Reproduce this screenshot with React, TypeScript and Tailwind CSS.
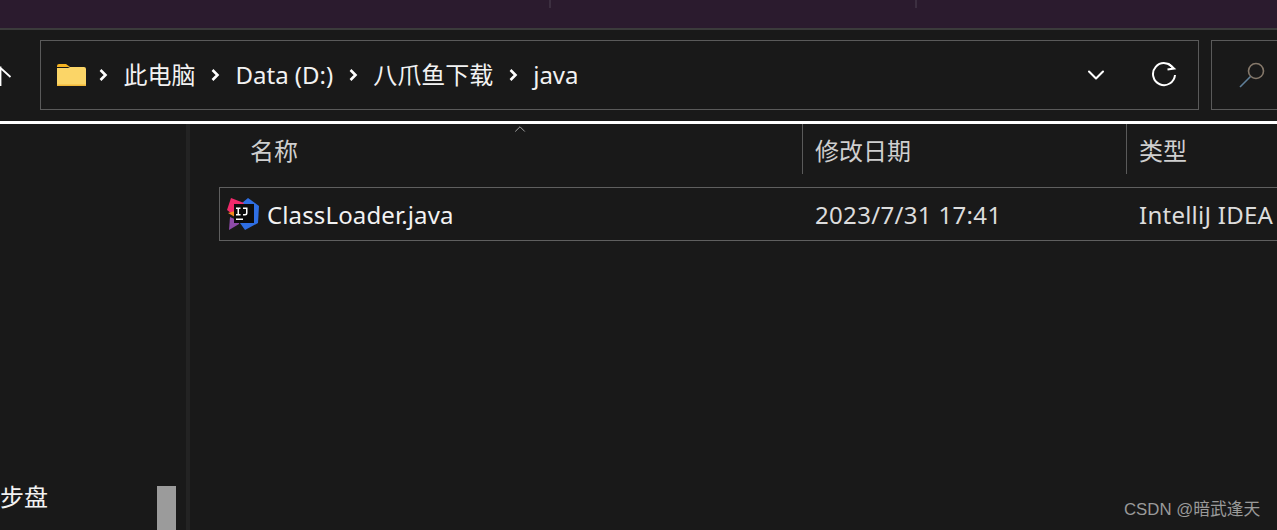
import { ChevronDown, ChevronUp } from 'lucide-react';

const font = { sans: 'font-["Noto_Sans","Noto_Sans_CJK_SC",sans-serif]' };

function FolderIcon() {
	return (
		<svg width="29" height="23" viewBox="0 0 29 23">
			<path d="M0 2a2 2 0 0 1 2-2h7l4 3h-13z" fill="#f5b321" />
			<path d="M0 4h11l2-1h14a2 2 0 0 1 2 2v16a1 1 0 0 1-1 1H1a1 1 0 0 1-1-1z" fill="#fbd567" />
			<rect x="0" y="20.5" width="29" height="1.5" fill="#f2b838" />
		</svg>
	);
}

function IdeaIcon() {
	return (
		<svg width="32" height="32" viewBox="0 0 32 32">
			<path d="M21 0l11 8-1 17-13 7-5-7 2-20z" fill="#2f6fe4" />
			<path d="M4 0l13 5-8 14-9-7z" fill="#f02a6b" />
			<path d="M1 15l7-2v6z" fill="#f58a1f" />
			<path d="M3 19l9 4v3l-10 6z" fill="#8e4aa8" />
			<rect x="7" y="6" width="20" height="19" fill="#0c0c0c" />
			<rect x="9" y="20.500" width="7" height="1.500" fill="#ffffff" />
			<path d="M9 9.500h4.500V11h-1.500v5h1.500v1.500H9V16h1.500v-5H9z" fill="#ffffff" />
			<path d="M16 9.500h4.500v5.500q0 2.500-2.500 2.500h-2V16h2q1 0 1-1V11h-3z" fill="#ffffff" />
		</svg>
	);
}

function RefreshIcon() {
	return (
		<svg width="26" height="26" viewBox="0 0 26 26" fill="none" stroke="#ffffff" strokeWidth="2">
			<path d="M22.500 6.500A11 11 0 1 0 24 13" />
			<path d="M17 1.500l6 5-6.500 1" />
		</svg>
	);
}

function SearchIcon() {
	return (
		<svg width="26" height="26" viewBox="0 0 26 26" fill="none" strokeWidth="1.600">
			<circle cx="17" cy="9" r="7.500" stroke="#85786a" />
			<path d="M11.500 14.500L1 25" stroke="#5f7f99" />
		</svg>
	);
}

function Crumb({ label }: { label: string }) {
	return (
		<>
			<svg width="9" height="14" viewBox="0 0 9 14" fill="none" stroke="#ffffff" strokeWidth="2.600" className="shrink-0">
				<path d="M1.500 2l5 5-5 5" />
			</svg>
			<span className="text-[24px] text-[#f2f2f2] leading-none whitespace-nowrap">{label}</span>
		</>
	);
}

export default function App() {
	return (
		<div className={`relative h-[530px] w-[1277px] overflow-hidden bg-[#191919] ${font.sans}`}>
			{/* title bar */}
			<div className="flex h-[28px] bg-[#2b1b2e]">
				<div className="ml-[549px] h-[8px] w-[2px] bg-[#3c2f40]" />
				<div className="ml-[364px] h-[8px] w-[2px] bg-[#3c2f40]" />
			</div>
			<div className="h-[2px] bg-[#3b3b3b]" />

			{/* toolbar */}
			<div className="flex h-[91px] items-start gap-[12px] pt-[10px]">
				<div className="flex h-[70px] w-[1159px] ml-[40px] items-center border border-[#5a5a5a] pl-[16px]">
					<FolderIcon />
					<div className="ml-[13px] flex items-center gap-[15.5px]">
						<Crumb label="此电脑" />
						<Crumb label="Data (D:)" />
						<Crumb label="八爪鱼下载" />
						<Crumb label="java" />
					</div>
					<div className="ml-auto flex items-center gap-[41px] pr-[21px]">
						<ChevronDown size={28} strokeWidth={1.8} className="text-white" />
						<RefreshIcon />
					</div>
				</div>
				<div className="flex h-[70px] flex-1 items-center border border-y-[#5a5a5a] border-l-[#5a5a5a] border-r-0 pl-[27px]">
					<SearchIcon />
				</div>
			</div>
			<svg width="12" height="22" viewBox="0 0 12 22" fill="none" stroke="#ffffff" strokeWidth="1.800" className="absolute left-0 top-[65px]">
				<path d="M-1 1.500L10.500 12M0.500 1.500V21" />
			</svg>

			<div className="h-[3px] bg-white" />

			{/* content */}
			<div className="flex h-[406px]">
				<div className="relative w-[186px] shrink-0 bg-[#191919]">
					<span className="absolute left-0 top-[361px] text-[24px] leading-none text-[#f2f2f2]">步盘</span>
					<div className="absolute left-[157px] top-[362px] h-[44px] w-[19px] bg-[#9b9b9b]" />
				</div>
				<div className="w-[4px] shrink-0 bg-[#232323]" />
				<div className="relative flex-1">
					{/* column headers */}
					<div className="flex h-[50px] text-[24px] leading-none text-[#cfcfcf]">
						<div className="flex w-[612px] items-center pl-[60px] pt-[4px]">名称</div>
						<div className="flex w-[324px] items-center border-l border-[#5a5a5a] pl-[12px] pt-[4px]">修改日期</div>
						<div className="flex flex-1 items-center border-l border-[#5a5a5a] pl-[12px] pt-[4px]">类型</div>
					</div>
					<ChevronUp size={18} strokeWidth={1} className="absolute left-[321px] -top-[4px] text-[#cfcfcf]" />

					{/* file row */}
					<div className="ml-[29px] mt-[13px] flex h-[54px] items-center border border-r-0 border-[#5f5f5f] text-[24px] leading-none text-[#f2f2f2]">
						<div className="flex w-[583px] items-center pl-[7px]">
							<IdeaIcon />
							<span className="ml-[8px] pt-[1px] tracking-[0.13px]">ClassLoader.java</span>
						</div>
						<div className="w-[324px] pl-[12px] pt-[1px] text-[#dcdcdc] tracking-[0.33px]">2023/7/31 17:41</div>
						<div className="flex-1 pl-[12px] pt-[1px] text-[#dcdcdc] whitespace-nowrap tracking-[0.25px]">IntelliJ IDEA</div>
					</div>
				</div>
			</div>

			<span className='absolute left-[1124px] top-[502px] text-[16.8px] leading-none text-[#9a9a9a] font-["Liberation_Sans","Noto_Sans_CJK_SC",sans-serif]'>CSDN @暗武逢天</span>
		</div>
	);
}
